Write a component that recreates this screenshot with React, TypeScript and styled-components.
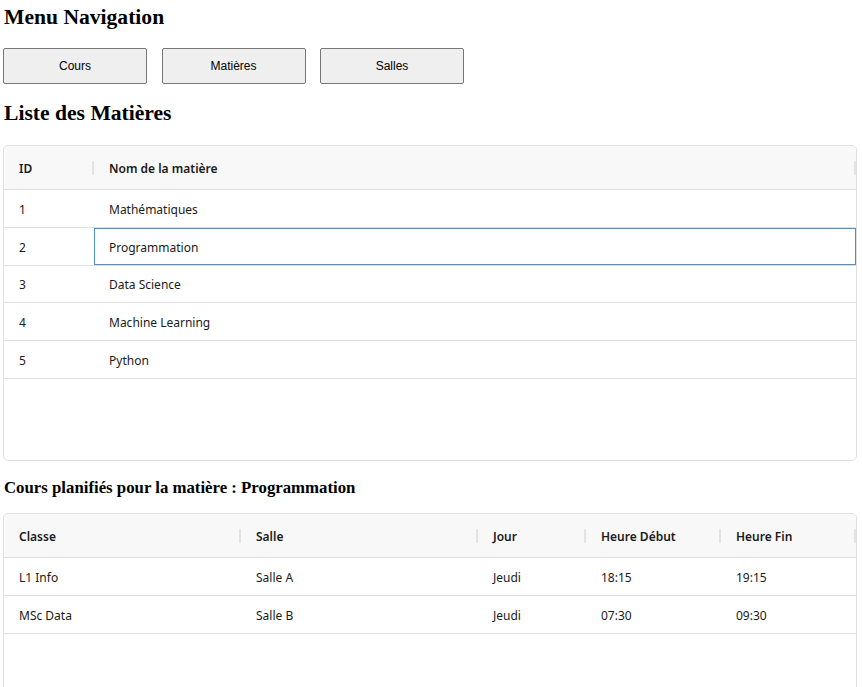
import React from "react";
import styled, { createGlobalStyle } from "styled-components";

const Global = createGlobalStyle`
  html, body { margin: 0; padding: 0; background: #fff; }
  body { font-family: "Liberation Serif", "Times New Roman", serif; color: #000; }
`;

const Page = styled.div`
  display: flex;
  flex-direction: column;
  padding: 5px 5px 0 3px;
`;

const Title = styled.h2<{ $top?: number }>`
  margin: ${(p) => p.$top ?? 0}px 0 0 1px;
  font-size: 21.6px;
  font-weight: bold;
  line-height: 24px;
`;

const SubTitle = styled.h3<{ $top?: number }>`
  margin: ${(p) => p.$top ?? 0}px 0 0 1px;
  font-size: 16.8px;
  font-weight: bold;
  line-height: 19px;
`;

const Nav = styled.nav`
  display: flex;
  gap: 14.5px;
  margin-top: 19px;
`;

const NavButton = styled.button`
  width: 144px;
  height: 36px;
  box-sizing: border-box;
  background: #efefef;
  border: 1px solid #767676;
  border-radius: 2px;
  font-family: "Liberation Sans", Arial, sans-serif;
  font-size: 12px;
  color: #000;
  padding: 0;
  cursor: pointer;
`;

const Grid = styled.div<{ $top: number; $height: number }>`
  margin-top: ${(p) => p.$top}px;
  width: 854px;
  height: ${(p) => p.$height}px;
  box-sizing: border-box;
  border: 1px solid #e0e0e0;
  border-radius: 5px;
  overflow: hidden;
  font-family: "Noto Sans", "Open Sans", sans-serif;
  font-size: 12px;
  color: #1a1a1a;
`;

const HeaderRow = styled.div<{ $cols: string }>`
  display: grid;
  grid-template-columns: ${(p) => p.$cols};
  height: 43px;
  background: #f8f8f8;
  border-bottom: 1px solid #e0e0e0;
`;

const HeaderCell = styled.div<{ $sep?: boolean }>`
  position: relative;
  display: flex;
  align-items: center;
  padding: 2px 0 0 15px;
  font-weight: 600;
  color: #1a1a1a;
  &::after {
    content: "";
    display: ${(p) => (p.$sep === false ? "none" : "block")};
    position: absolute;
    right: 0;
    top: 15px;
    width: 2px;
    height: 14px;
    background: #e3e3e3;
  }
`;

const Row = styled.div<{ $cols: string }>`
  display: grid;
  grid-template-columns: ${(p) => p.$cols};
  height: 36.8px;
  border-bottom: 1px solid #e0e0e0;
`;

const Cell = styled.div<{ $focused?: boolean }>`
  display: flex;
  align-items: center;
  padding: 2px 0 0 15px;
  box-sizing: border-box;
  ${(p) => p.$focused && `border: 1px solid #4a90d9; padding-left: 14px;`}
`;

const cols1 = "90px 762px 1fr";
const cols2 = "237px 237px 108px 135px 135px 1fr";

const matieres = [
  { id: 1, nom: "Mathématiques" },
  { id: 2, nom: "Programmation" },
  { id: 3, nom: "Data Science" },
  { id: 4, nom: "Machine Learning" },
  { id: 5, nom: "Python" },
];

const cours = [
  { classe: "L1 Info", salle: "Salle A", jour: "Jeudi", debut: "18:15", fin: "19:15" },
  { classe: "MSc Data", salle: "Salle B", jour: "Jeudi", debut: "07:30", fin: "09:30" },
];

export default function App() {
  return (
    <>
      <Global />
      <Page>
        <Title>Menu Navigation</Title>
        <Nav>
          <NavButton>Cours</NavButton>
          <NavButton>Matières</NavButton>
          <NavButton>Salles</NavButton>
        </Nav>
        <Title $top={17}>Liste des Matières</Title>
        <Grid $top={20} $height={316}>
          <HeaderRow $cols={cols1}>
            <HeaderCell>ID</HeaderCell>
            <HeaderCell>Nom de la matière</HeaderCell>
            <HeaderCell $sep={false} />
          </HeaderRow>
          {matieres.map((m) => (
            <Row key={m.id} $cols={cols1}>
              <Cell>{m.id}</Cell>
              <Cell $focused={m.id === 2}>{m.nom}</Cell>
              <Cell />
            </Row>
          ))}
        </Grid>
        <SubTitle $top={17}>Cours planifiés pour la matière : Programmation</SubTitle>
        <Grid $top={16} $height={316}>
          <HeaderRow $cols={cols2}>
            <HeaderCell>Classe</HeaderCell>
            <HeaderCell>Salle</HeaderCell>
            <HeaderCell>Jour</HeaderCell>
            <HeaderCell>Heure Début</HeaderCell>
            <HeaderCell>Heure Fin</HeaderCell>
            <HeaderCell $sep={false} />
          </HeaderRow>
          {cours.map((c) => (
            <Row key={c.classe} $cols={cols2}>
              <Cell>{c.classe}</Cell>
              <Cell>{c.salle}</Cell>
              <Cell>{c.jour}</Cell>
              <Cell>{c.debut}</Cell>
              <Cell>{c.fin}</Cell>
              <Cell />
            </Row>
          ))}
        </Grid>
      </Page>
    </>
  );
}
